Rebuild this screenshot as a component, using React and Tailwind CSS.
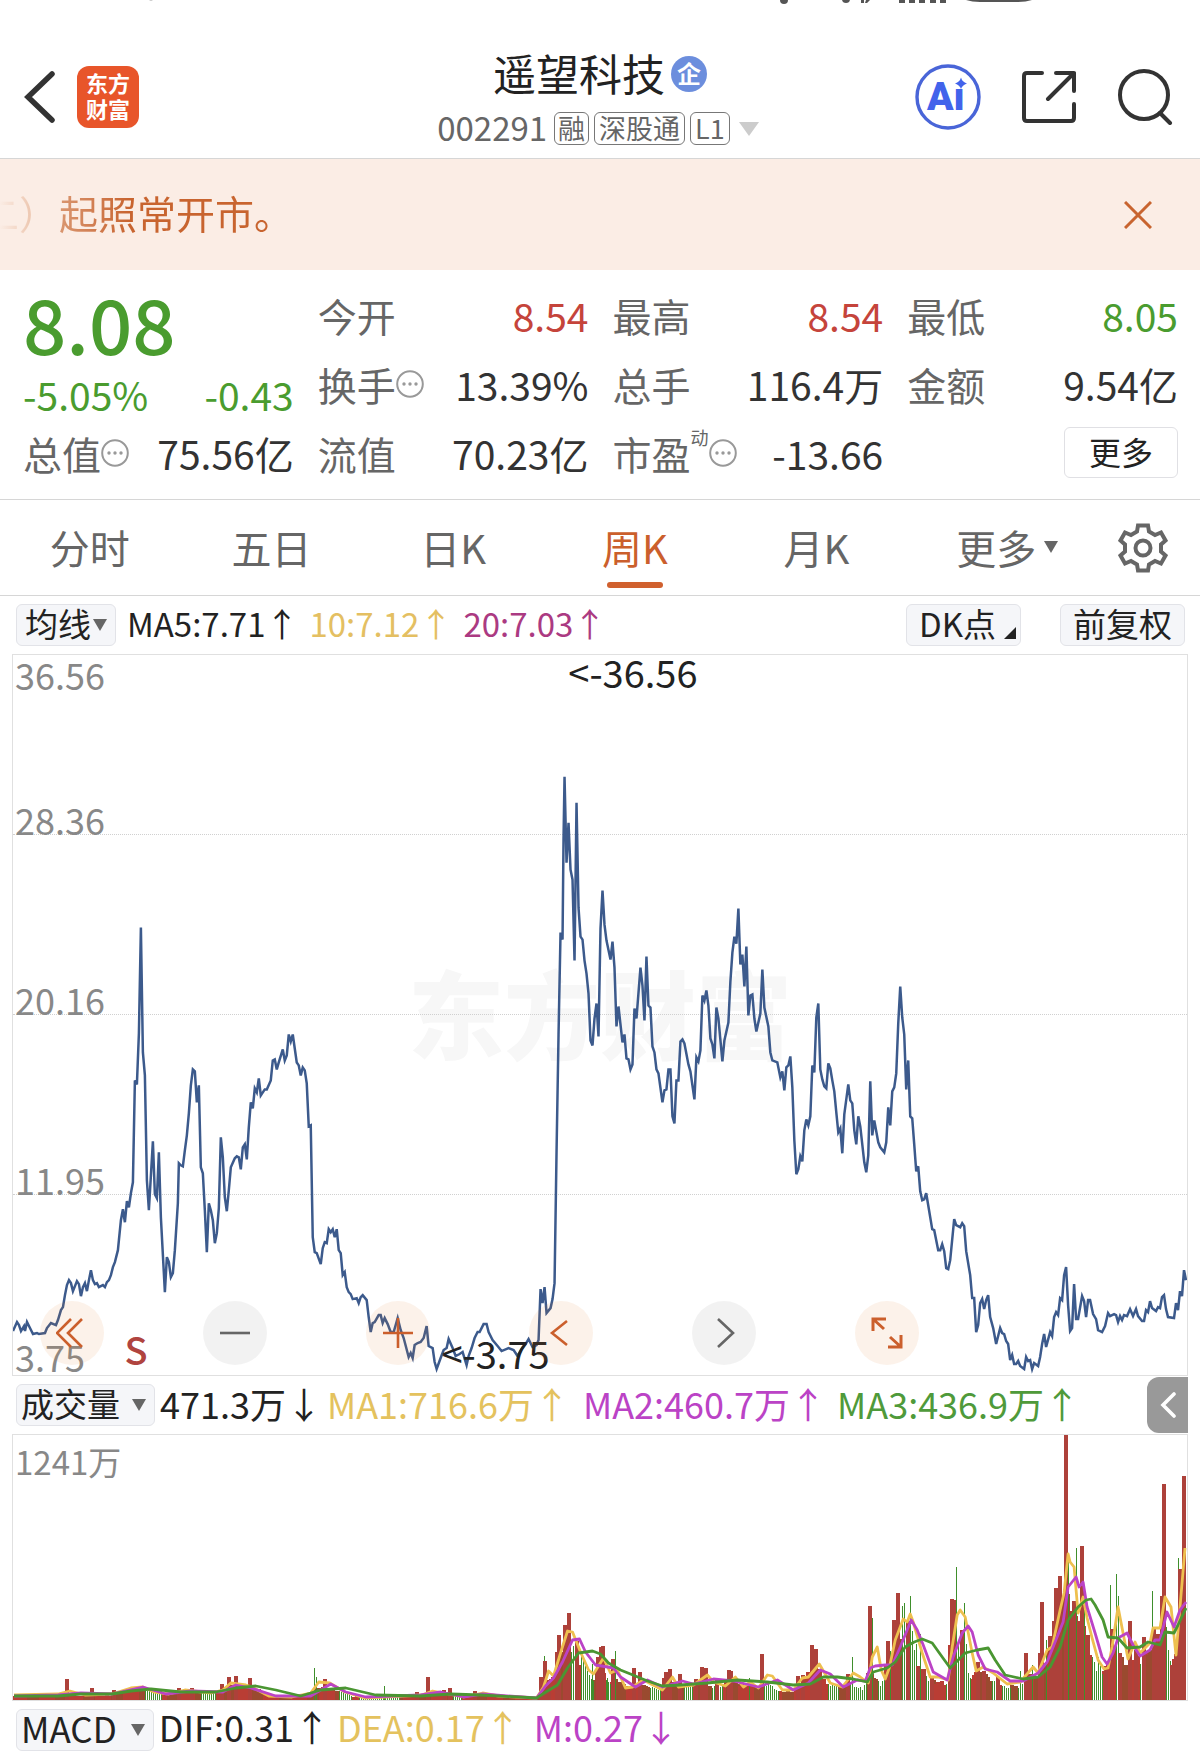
import React from "react";

const PRICE =
  "12,1331 16,1322 18,1325 20,1331 23,1326 24,1331 26,1322 29,1328 32,1334 36,1333 38,1334 44,1333 46,1328 50,1323 55,1325 57,1320 60,1310 62,1307 64,1295 66,1285 68,1280 70,1283 72,1291 76,1281 78,1284 80,1296 82,1287 84,1283 86,1291 88,1280 90,1270 92,1280 94,1284 96,1283 98,1287 102,1285 104,1287 106,1282 108,1280 110,1275 112,1267 114,1262 117,1250 118,1240 120,1220 122,1209 124,1222 126,1201 128,1207 130,1193 132,1182 134,1080 136,1084 138,1033 140,927 142,1052 144,1075 146,1180 148,1210 152,1141 154,1194 156,1198 158,1152 160,1217 164,1292 166,1257 168,1262 170,1277 172,1273 174,1250 177,1203 178,1163 180,1165 182,1166 184,1150 186,1135 188,1113 190,1085 192,1069 194,1071 196,1102 198,1085 200,1167 202,1173 204,1210 206,1252 208,1203 210,1210 212,1220 214,1243 216,1233 218,1208 220,1137 222,1157 224,1197 226,1211 228,1190 230,1167 234,1158 236,1156 238,1157 240,1169 242,1147 244,1144 246,1159 248,1127 250,1102 252,1108 254,1088 256,1092 258,1078 260,1095 264,1089 266,1089 270,1080 272,1060 274,1059 276,1069 278,1062 282,1049 284,1060 286,1055 288,1034 290,1041 292,1034 296,1062 298,1065 300,1075 302,1067 304,1070 306,1083 308,1126 310,1125 312,1237 314,1252 316,1253 320,1264 322,1248 324,1242 326,1243 328,1229 330,1232 332,1229 334,1237 336,1229 338,1250 340,1253 342,1275 344,1272 346,1287 348,1292 350,1294 352,1299 356,1298 358,1303 360,1297 362,1295 366,1300 368,1317 370,1332 372,1323 374,1322 378,1315 380,1315 382,1323 384,1318 387,1324 390,1332 393,1332 397,1318 400,1330 403,1338 408,1357 410,1353 412,1358 414,1345 417,1343 420,1342 423,1338 426,1326 428,1346 432,1348 434,1362 436,1369 440,1358 443,1350 446,1348 448,1339 452,1348 455,1356 459,1354 462,1352 466,1365 468,1356 471,1348 474,1338 477,1332 479,1332 483,1324 486,1324 488,1332 492,1340 497,1346 501,1351 508,1348 513,1350 517,1356 521,1349 525,1344 528,1339 532,1347 536,1345 538,1340 540,1289 542,1303 544,1287 546,1313 550,1308 552,1299 554,1283 556,1152 558,1034 560,932 562,939 563,838 564,776 566,862 568,822 570,869 572,879 574,960 576,802 578,907 580,936 582,939 584,960 586,973 588,993 590,1040 592,1045 594,1018 596,1003 598,1036 600,928 602,890 604,924 606,940 610,959 612,941 614,967 616,1026 618,1006 622,1042 624,1034 626,1058 628,1059 630,1069 632,1064 634,1008 636,1018 640,967 642,985 644,1020 646,956 648,1005 650,1007 652,1046 654,1052 656,1069 658,1073 662,1102 664,1090 666,1089 668,1069 670,1069 672,1116 674,1123 676,1080 678,1080 680,1041 682,1039 684,1043 688,1064 690,1071 694,1099 696,1057 698,1061 700,1050 702,995 704,1000 706,990 708,1005 710,1038 712,1044 714,1058 716,1007 718,1018 722,1061 724,1040 728,1022 730,981 732,952 734,936 736,943 738,908 740,964 742,954 744,986 746,946 748,1015 750,995 752,994 754,1018 756,1031 760,1013 762,969 764,1007 768,1026 770,1052 772,1060 777,1062 780,1077 782,1071 784,1090 786,1067 788,1065 790,1056 792,1087 794,1140 796,1174 798,1169 800,1156 802,1161 804,1130 806,1119 808,1125 810,1116 812,1065 814,1072 816,1017 818,1003 820,1069 822,1079 824,1086 826,1088 828,1063 830,1068 832,1080 834,1091 836,1112 838,1132 840,1128 842,1153 844,1114 848,1084 850,1100 852,1103 854,1130 856,1144 858,1116 860,1126 864,1162 866,1172 868,1155 870,1081 872,1135 874,1120 878,1142 880,1147 884,1152 886,1142 888,1107 890,1125 892,1091 894,1087 896,1073 898,1023 900,986 902,1017 904,1034 906,1089 908,1060 910,1116 912,1118 914,1144 916,1171 918,1166 920,1191 922,1200 924,1199 926,1193 928,1205 932,1229 934,1230 938,1250 940,1250 942,1244 944,1251 946,1268 948,1269 950,1260 954,1219 956,1225 960,1227 962,1223 964,1226 966,1251 970,1275 972,1298 974,1298 976,1332 978,1325 980,1303 982,1299 984,1309 986,1300 988,1295 990,1317 993,1328 996,1344 1000,1328 1002,1333 1004,1334 1006,1341 1008,1344 1010,1360 1012,1355 1014,1364 1016,1364 1018,1361 1020,1366 1024,1369 1026,1357 1028,1361 1030,1360 1032,1369 1034,1363 1038,1366 1040,1357 1042,1344 1044,1334 1046,1347 1050,1332 1052,1336 1054,1317 1056,1312 1058,1315 1060,1298 1062,1300 1064,1275 1066,1267 1068,1305 1070,1331 1072,1328 1074,1284 1076,1319 1078,1319 1082,1296 1084,1301 1086,1317 1088,1300 1090,1300 1093,1314 1096,1319 1098,1330 1102,1332 1105,1326 1108,1313 1110,1316 1114,1314 1116,1315 1118,1322 1120,1316 1122,1320 1124,1315 1127,1316 1130,1309 1133,1316 1136,1309 1138,1316 1142,1321 1144,1321 1146,1310 1148,1312 1150,1301 1152,1308 1156,1311 1158,1307 1160,1308 1162,1297 1164,1295 1166,1309 1168,1317 1174,1318 1176,1303 1178,1310 1180,1291 1182,1296 1184,1270 1186,1280";

const MA_SHORT =
  "13,1695 57,1694 69,1691 84,1695 111,1694 130,1688 142,1687 153,1692 168,1694 184,1690 210,1693 222,1690 230,1683 245,1685 251,1687 268,1696 291,1697 310,1693 318,1682 329,1683 344,1692 364,1698 421,1695 432,1691 463,1697 482,1693 498,1696 536,1698 543,1687 548,1671 553,1676 560,1653 567,1631 572,1632 580,1652 588,1670 593,1674 603,1658 610,1673 617,1670 625,1688 632,1687 643,1680 662,1690 672,1677 678,1687 693,1685 707,1675 713,1682 725,1686 735,1677 743,1687 750,1682 758,1688 767,1675 772,1676 782,1690 793,1690 802,1678 808,1677 819,1664 830,1683 842,1687 853,1673 860,1677 868,1683 872,1657 877,1647 881,1670 885,1679 889,1668 895,1640 903,1619 907,1622 910,1614 913,1622 922,1653 930,1677 938,1677 948,1680 952,1647 957,1615 960,1610 965,1617 972,1653 976,1671 983,1667 993,1673 1007,1684 1020,1682 1033,1667 1038,1673 1047,1650 1052,1647 1060,1610 1064,1593 1068,1554 1070,1562 1074,1567 1078,1613 1083,1597 1087,1618 1092,1638 1098,1660 1104,1669 1108,1668 1112,1647 1118,1607 1123,1633 1128,1659 1135,1642 1140,1653 1150,1643 1153,1628 1160,1628 1165,1597 1171,1607 1176,1655 1180,1607 1185,1548";

const MA_MID =
  "13,1696 57,1695 80,1693 111,1694 142,1687 165,1694 190,1691 222,1692 235,1685 250,1688 275,1696 310,1696 330,1684 345,1692 365,1697 420,1695 440,1692 463,1697 482,1694 536,1698 545,1686 553,1678 562,1662 572,1640 579,1639 585,1652 595,1665 607,1667 613,1668 620,1677 635,1687 647,1680 662,1687 682,1681 693,1684 713,1679 733,1681 758,1687 777,1680 793,1690 808,1683 820,1670 830,1674 843,1687 857,1680 865,1681 870,1668 875,1666 885,1665 892,1665 900,1647 911,1620 917,1630 923,1645 933,1672 947,1680 953,1657 962,1633 968,1626 972,1632 978,1655 985,1669 997,1672 1010,1681 1023,1681 1038,1673 1047,1662 1055,1642 1063,1622 1068,1587 1076,1577 1079,1587 1083,1582 1087,1607 1095,1633 1102,1657 1107,1664 1113,1653 1118,1638 1127,1633 1133,1645 1140,1656 1150,1650 1155,1640 1160,1640 1167,1612 1174,1627 1180,1610 1186,1602";

const MA_LONG =
  "13,1696 57,1696 80,1694 111,1694 130,1691 150,1689 180,1692 215,1692 235,1688 255,1686 275,1690 300,1696 320,1690 345,1688 375,1695 420,1696 450,1694 480,1695 536,1698 547,1691 557,1685 567,1668 578,1653 592,1651 600,1654 608,1663 620,1670 630,1674 647,1681 662,1686 680,1685 707,1683 737,1680 767,1682 793,1685 810,1684 823,1677 837,1677 853,1679 867,1682 873,1672 887,1668 895,1662 905,1647 914,1642 922,1639 932,1643 942,1657 950,1668 965,1653 977,1650 988,1648 995,1660 1005,1675 1023,1679 1038,1677 1050,1667 1060,1647 1068,1620 1078,1607 1086,1600 1091,1599 1095,1605 1103,1620 1108,1637 1118,1638 1127,1648 1140,1647 1148,1642 1160,1645 1165,1632 1174,1633 1178,1625 1186,1608";

/* Typical weekly volume as [x, height] knots, in chart units */
const VOLUME_BASE = [
  [12, 4], [60, 7], [75, 4], [110, 5], [126, 13], [142, 13], [160, 9], [175, 6], [190, 10], [215, 7], [222, 13],
  [235, 17], [250, 15], [265, 8], [285, 3], [308, 3], [315, 14], [325, 14], [340, 9], [352, 4], [420, 5], [445, 9],
  [455, 4], [475, 7], [490, 4], [505, 3], [538, 3], [545, 20], [555, 30], [562, 55], [568, 62], [576, 48], [592, 20],
  [600, 44], [608, 18], [615, 22], [630, 14], [645, 16], [660, 11], [670, 21], [680, 16], [700, 17], [715, 15],
  [730, 22], [745, 16], [760, 15], [768, 18], [780, 9], [795, 9], [803, 22], [815, 40], [825, 19], [840, 14],
  [850, 18], [862, 12], [870, 34], [880, 16], [890, 50], [898, 80], [908, 72], [918, 36], [930, 22], [946, 18],
  [952, 74], [958, 58], [970, 24], [980, 34], [992, 22], [1005, 14], [1020, 16], [1030, 24], [1040, 27], [1048, 52],
  [1058, 84], [1066, 120], [1074, 88], [1082, 86], [1090, 54], [1100, 20], [1112, 60], [1118, 60], [1124, 38],
  [1135, 46], [1142, 42], [1155, 62], [1164, 72], [1172, 36], [1176, 48], [1184, 140], [1188, 140],
];

/* Stretches in which falling weeks prevail */
const FALLING = [
  [143, 160], [200, 215], [338, 350], [358, 398], [452, 460], [570, 574], [579, 592], [606, 610], [650, 661],
  [684, 693], [711, 722], [764, 779], [828, 838], [850, 866], [878, 884], [901, 906], [909, 916], [926, 930],
  [946, 949], [956, 960], [963, 971], [992, 996], [1001, 1010], [1018, 1024], [1091, 1102], [1109, 1110],
  [1115, 1119], [1140, 1143], [1166, 1170],
];

const RISING_PEAKS = [
  [66, 21], [91, 12], [113, 10], [178, 12], [191, 12], [221, 16], [228, 23], [235, 24], [249, 22], [324, 21],
  [416, 8], [427, 23], [443, 10], [449, 12], [474, 9], [540, 23], [544, 39], [548, 20], [556, 48], [558, 65],
  [564, 75], [568, 87], [576, 59], [597, 43], [600, 53], [603, 54], [613, 41], [634, 32], [640, 28], [664, 22],
  [666, 28], [670, 31], [680, 26], [696, 21], [702, 33], [706, 32], [717, 22], [729, 30], [731, 29], [762, 46],
  [798, 24], [803, 25], [812, 55], [816, 51], [820, 31], [848, 26], [870, 94], [888, 59], [894, 80], [898, 107],
  [908, 79], [918, 34], [924, 31], [932, 23], [950, 41], [952, 101], [954, 100], [962, 70], [978, 38], [984, 29],
  [998, 23], [1026, 47], [1030, 26], [1040, 47], [1042, 98], [1050, 64], [1054, 79], [1056, 112], [1060, 124],
  [1066, 265], [1072, 89], [1074, 99], [1080, 79], [1082, 154], [1088, 65], [1106, 31], [1112, 71], [1120, 47],
  [1130, 79], [1136, 50], [1144, 63], [1154, 71], [1158, 66], [1162, 104], [1164, 216], [1172, 35], [1176, 46],
  [1180, 131], [1184, 224],
];

const FALLING_PEAKS = [
  [313, 32], [315, 23], [383, 14], [543, 44], [570, 48], [572, 54], [580, 46], [582, 41], [584, 34], [586, 29],
  [591, 36], [607, 22], [615, 49], [749, 22], [852, 43], [872, 82], [890, 49], [902, 94], [904, 97], [910, 104],
  [912, 69], [914, 43], [916, 56], [920, 66], [956, 133], [958, 58], [964, 97], [966, 56], [1020, 29], [1032, 35],
  [1046, 60], [1068, 139], [1076, 152], [1084, 90], [1092, 40], [1098, 43], [1100, 34], [1110, 115], [1116, 126],
  [1118, 104], [1152, 109], [1166, 73], [1168, 50], [1170, 38], [1178, 142], [1182, 170],
];

function baseAt(x) {
  for (let i = 1; i < VOLUME_BASE.length; i++) {
    const [x1, h1] = VOLUME_BASE[i];
    if (x <= x1) {
      const [x0, h0] = VOLUME_BASE[i - 1];
      return h0 + ((h1 - h0) * (x - x0)) / (x1 - x0);
    }
  }
  return 0;
}

const WEEKS = Array.from({ length: 586 }, (_, i) => {
  const x = 14 + i * 2;
  const wobble = 0.88 + 0.12 * Math.sin(i * 2.3) * Math.cos(i * 0.9);
  return { x, h: Math.round(baseAt(x) * wobble), falling: FALLING.some(([a, b]) => x >= a && x <= b) };
});

function VolumeBars() {
  return (
    <g shapeRendering="crispEdges">
      {WEEKS.filter((w) => !w.falling).map((w) => (
        <rect key={w.x} x={w.x - 2} y={1700 - w.h} width="4" height={w.h} fill={w.x % 28 < 12 ? "#9a4a2f" : "#b93d34"} />
      ))}
      {WEEKS.filter((w) => w.falling).map((w) => (
        <rect key={w.x} x={w.x} y={1700 - w.h} width="1" height={w.h} fill="#3f8f2c" />
      ))}
      {FALLING_PEAKS.map(([x, h]) => (
        <rect key={x} x={x} y={1700 - h} width="1" height={h} fill="#3f8f2c" />
      ))}
      {RISING_PEAKS.map(([x, h]) => (
        <rect key={x} x={x - 2} y={1700 - h} width="4" height={h} fill="#ad413a" />
      ))}
    </g>
  );
}

function Chip({ children, className }) {
  return (
    <button
      type="button"
      className={`flex h-[42px] shrink-0 items-center rounded-md border border-[#e2e3e8] bg-[#f5f6f9] pb-1 text-[33px] leading-[36px] text-[#222] ${className}`}
    >
      {children}
    </button>
  );
}

function Caret({ className }) {
  return (
    <svg viewBox="0 0 14 14" preserveAspectRatio="none" className={className} aria-hidden="true">
      <path d="M0 0H14L7 14Z" fill="currentColor" />
    </svg>
  );
}

function Info() {
  return (
    <svg viewBox="0 0 28 28" className="h-7 w-7 shrink-0 text-[#999]" aria-hidden="true">
      <circle cx="14" cy="14" r="12.800" fill="none" stroke="currentColor" strokeWidth="2" />
      <circle cx="8" cy="14" r="1.700" fill="currentColor" />
      <circle cx="14" cy="14" r="1.700" fill="currentColor" />
      <circle cx="20" cy="14" r="1.700" fill="currentColor" />
    </svg>
  );
}

function Stat({ label, value, tone = "text-[#333]", info, sup }) {
  return (
    <div className="flex items-center justify-between whitespace-nowrap">
      <span className="flex items-center text-[#666]">
        {label}
        {sup && <sup className="relative -top-4 text-[18px] leading-none">{sup}</sup>}
        {info && <Info />}
      </span>
      <span className={tone}>{value}</span>
    </div>
  );
}

function RoundButton({ label, warm, children }) {
  return (
    <button
      type="button"
      aria-label={label}
      className={`flex size-16 items-center justify-center rounded-full ${
        warm ? "bg-[#e08030]/10 text-[#cb5f2c]" : "bg-black/5 text-[#666]"
      }`}
    >
      <svg viewBox="0 0 32 32" className="size-8" fill="none" stroke="currentColor" strokeWidth="2.600" aria-hidden="true">
        {children}
      </svg>
    </button>
  );
}

const TABS = ["分时", "五日", "日K", "周K", "月K"];

export default function App() {
  return (
    <div className="w-full overflow-hidden bg-white font-['Noto_Sans_CJK_SC',sans-serif] text-[#222]">
      <svg viewBox="0 0 1200 5" className="block w-full" aria-hidden="true">
        <g fill="#555">
          <circle cx="784" cy="0" r="4" />
          <circle cx="846" cy="-1" r="4" />
          <path d="M861 0h3v3h-3zM866 0h4l-3 3h-2z" />
          <path d="M899 0h6v3h-6zM909 0h6v3h-6zM919 0h6v3h-6zM930 0h6v3h-6zM940 0h6v3h-6z" />
          <path d="M966 0Q972 2 980 2H1018Q1026 2 1032 0" />
        </g>
        <circle cx="151" cy="-1" r="2" fill="#ccc" />
      </svg>

      <header className="flex h-[154px] items-center justify-between border-b border-[#d6d6d6] px-6 pt-[30px]">
        <div className="flex w-[280px] items-center gap-[21px]">
          <button type="button" aria-label="返回">
            <svg viewBox="0 0 32 52" className="h-[52px] w-8" fill="none" stroke="#333" strokeWidth="5.500" aria-hidden="true">
              <path d="M28 3L4 26L28 49" strokeLinecap="round" strokeLinejoin="miter" />
            </svg>
          </button>
          <div className="flex size-[62px] flex-col items-center justify-center rounded-xl bg-[#e8552a] pb-1 text-[22px] leading-[26px] font-bold text-white">
            <span>东方</span>
            <span>财富</span>
          </div>
        </div>
        <div className="flex flex-col items-center gap-1">
          <h1 className="flex items-center gap-1.5 text-[43px] leading-[60px]">
            遥望科技
            <span className="mt-1 flex size-9 items-center justify-center rounded-full bg-[#6c8edd] pb-0.5 text-[24px] leading-none font-bold text-white">
              企
            </span>
          </h1>
          <div className="flex items-center gap-[5px] pr-1 text-[27px] leading-[28px] text-[#666]">
            <span className="mr-0.5 pb-1 text-[33px] leading-[42px]">002291</span>
            <span className="flex h-[33px] items-center rounded-md border border-[#777] px-[3px] pb-0.5">融</span>
            <span className="flex h-[33px] items-center rounded-md border border-[#777] px-1 pb-0.5">深股通</span>
            <span className="flex h-[33px] items-center rounded-md border border-[#777] px-1 pb-0.5">L1</span>
            <button type="button" aria-label="切换" className="ml-1">
              <Caret className="h-3.5 w-5 text-[#ccc]" />
            </button>
          </div>
        </div>
        <div className="flex w-[280px] items-center justify-end gap-[41px] pr-[3px]">
          <button type="button" aria-label="AI 助手">
            <svg viewBox="0 0 66 66" className="size-[66px]" aria-hidden="true">
              <circle cx="33" cy="33" r="31" fill="none" stroke="#4965d8" strokeWidth="3.400" />
              <text x="12" y="46" fontFamily="Roboto" fontWeight="900" fontSize="39" fill="#4263eb">
                Aı
              </text>
              <path d="M46 13.500Q47.200 18 52 19.500Q47.200 21 46 25Q44.800 21 40 19.500Q44.800 18 46 13.500Z" fill="#4263eb" />
            </svg>
          </button>
          <button type="button" aria-label="分享">
            <svg viewBox="0 0 54 54" className="size-[54px]" fill="none" stroke="#333" strokeWidth="4" strokeLinecap="round" strokeLinejoin="round" aria-hidden="true">
              <path d="M20 3H5Q2 3 2 6V48Q2 51 5 51H49Q52 51 52 48V34" />
              <path d="M34 3H52V21M52 3L26 29" />
            </svg>
          </button>
          <button type="button" aria-label="搜索">
            <svg viewBox="0 0 56 56" className="size-14" fill="none" stroke="#333" strokeWidth="4" strokeLinecap="round" aria-hidden="true">
              <circle cx="27" cy="26" r="24" />
              <path d="M43 44L53 54" />
            </svg>
          </button>
        </div>
      </header>

      <div className="flex h-[111px] items-center justify-between bg-[#fbede5] pr-12 text-[39px] text-[#c8642f]">
        <p className="flex pb-1 whitespace-nowrap">
          <span className="-ml-5 bg-linear-to-r from-[#fbede5] from-25% to-[#e0a885] bg-clip-text text-transparent">二）</span>
          <span className="ml-px bg-linear-to-r from-[#d9966f] to-[#c8642f] to-30% bg-clip-text text-transparent">起照常开市。</span>
        </p>
        <button type="button" aria-label="关闭">
          <svg viewBox="0 0 28 28" className="size-7" fill="none" stroke="currentColor" strokeWidth="3" aria-hidden="true">
            <path d="M1 1L27 27M27 1L1 27" />
          </svg>
        </button>
      </div>

      <section className="grid h-[230px] grid-cols-4 grid-rows-[69px_69px_69px] gap-x-6 border-b border-[#d6d6d6] pt-2.5 pr-[22px] pl-[23px] text-[39px] leading-[60px]">
        <div className="row-span-2 flex flex-col text-[#4a9c2f]">
          <strong className="text-[76px] leading-[84px] font-medium">8.08</strong>
          <div className="flex justify-between whitespace-nowrap">
            <span>-5.05%</span>
            <span>-0.43</span>
          </div>
        </div>
        <Stat label="今开" value="8.54" tone="text-[#c5443b]" />
        <Stat label="最高" value="8.54" tone="text-[#c5443b]" />
        <Stat label="最低" value="8.05" tone="text-[#4a9c2f]" />
        <Stat label="换手" value="13.39%" info />
        <Stat label="总手" value="116.4万" />
        <Stat label="金额" value="9.54亿" />
        <Stat label="总值" value="75.56亿" info />
        <Stat label="流值" value="70.23亿" />
        <Stat label="市盈" sup="动" value="-13.66" info />
        <div className="flex items-center justify-end">
          <button type="button" className="flex h-[51px] items-center rounded-md border border-[#e0e0e4] px-6 pb-1 text-[32px] leading-[44px]">
            更多
          </button>
        </div>
      </section>

      <nav className="flex h-24 items-center border-b border-[#d6d6d6] pr-8 text-[40px] text-[#666]">
        <div className="grid h-full flex-1 grid-cols-6">
          {TABS.map((tab) => (
            <button
              key={tab}
              type="button"
              className={`relative flex items-center justify-center pr-0.5 pb-0.5 ${tab === "周K" ? "text-[#cb5f2c]" : ""}`}
            >
              {tab}
              {tab === "周K" && <span className="absolute bottom-[7px] h-1.5 w-14 rounded-full bg-[#d0602e]" />}
            </button>
          ))}
          <button type="button" className="flex items-center justify-center gap-2 pb-0.5 pl-4">
            更多
            <Caret className="h-3 w-3.5" />
          </button>
        </div>
        <button type="button" aria-label="设置" className="flex w-[78px] justify-end">
          <svg viewBox="0 0 50 50" className="size-[50px]" fill="none" stroke="#666" strokeWidth="4" strokeLinejoin="miter" aria-hidden="true">
            <path d="M20 2.500H30L31 8.500L37 12L43 9.500L47.500 17.500L43 21.500V28.500L47.500 32.500L43 40.500L37 38L31 41.500L30 47.500H20L19 41.500L13 38L7 40.500L2.500 32.500L7 28.500V21.500L2.500 17.500L7 9.500L13 12L19 8.500Z" />
            <circle cx="25" cy="25" r="7.500" />
          </svg>
        </button>
      </nav>

      <div className="px-3">
        <div className="flex h-[58px] items-center gap-[11px] pr-[3px] pl-1 text-[33px] leading-[40px] whitespace-nowrap">
          <Chip className="px-2">
            均线
            <Caret className="mt-1 ml-0.5 h-3 w-3.5 text-[#666]" />
          </Chip>
          <span className="pb-1">MA5:7.71↑</span>
          <span className="pb-1 text-[#e4bf62]">10:7.12↑</span>
          <span className="pb-1 text-[#ab3a82]">20:7.03↑</span>
          <span className="flex-1" />
          <Chip className="mr-7 pr-1 pl-3">
            DK点
            <svg viewBox="0 0 12 12" className="mt-5 ml-2 size-3" aria-hidden="true">
              <path d="M12 0V12H0Z" fill="#222" />
            </svg>
          </Chip>
          <Chip className="px-3">前复权</Chip>
        </div>

        <section className="relative h-[722px] border border-[#e0e0e0]">
          <div className="absolute inset-0 flex items-center justify-center pb-2 text-[96px] leading-none font-black text-[#f7f7f7]">
            东方财富
          </div>
          <div className="absolute inset-0 grid grid-rows-4 text-[36px] leading-[30px] text-[#888]">
            <div className="flex flex-col justify-between border-b border-dotted border-[#d0d0d0] pt-1 pl-0.5">
              <span>36.56</span>
              <span>28.36</span>
            </div>
            <div className="flex items-end border-b border-dotted border-[#d0d0d0] pl-0.5">20.16</div>
            <div className="flex items-end border-b border-dotted border-[#d0d0d0] pl-0.5">11.95</div>
            <div className="flex items-end pb-1 pl-0.5">3.75</div>
          </div>
          <svg viewBox="12 654 1175 721" preserveAspectRatio="none" className="absolute inset-0 h-full w-full" aria-label="周K走势">
            <polyline points={PRICE} fill="none" stroke="#3c5a8c" strokeWidth="2.500" />
          </svg>
          <span className="absolute top-0 left-[47.3%] text-[38px] leading-[34px]">&lt;-36.56</span>
          <span className="absolute bottom-0 left-[36.5%] text-[38px] leading-[44px]">&lt;-3.75</span>
          <span className="absolute bottom-0 left-[9.5%] text-[38px] leading-[52px] font-medium text-[#b0443f]">S</span>
          <div className="absolute bottom-2.5 left-[27px] flex gap-[99px]">
            <RoundButton label="最早" warm>
              <path d="M15 2L1 16L15 30M26 2L12 16L26 30" />
            </RoundButton>
            <RoundButton label="缩小">
              <path d="M1 16H31" />
            </RoundButton>
            <RoundButton label="放大" warm>
              <path d="M1 16H31M16 1V31" />
            </RoundButton>
            <RoundButton label="向左" warm>
              <path d="M22 4L7 16L22 28" />
            </RoundButton>
            <RoundButton label="向右">
              <path d="M10 2L25 16L10 30" />
            </RoundButton>
            <RoundButton label="全屏" warm>
              <path d="M2 14V2H15M2 2L13 12M30 18V30H17M30 30L19 20" strokeWidth="3" />
            </RoundButton>
          </div>
        </section>

        <div className="flex h-[58px] items-center gap-[9px] pl-1 text-[36px] leading-[42px] whitespace-nowrap">
          <Chip className="-mr-1 pr-2 pl-1">
            成交量
            <Caret className="mt-1 ml-3 h-3 w-3.5 text-[#666]" />
          </Chip>
          <span className="pb-1">471.3万↓</span>
          <span className="-ml-1 pb-1 text-[#e4c25e]">MA1:716.6万↑</span>
          <span className="ml-1 pb-1 text-[#bb43c6]">MA2:460.7万↑</span>
          <span className="ml-0.5 pb-1 text-[#4f9a3a]">MA3:436.9万↑</span>
          <button type="button" aria-label="展开" className="ml-auto flex h-14 w-[41px] shrink-0 items-center justify-center rounded-l-xl bg-[#999]">
            <svg viewBox="0 0 16 26" className="h-[26px] w-4" fill="none" stroke="#fff" strokeWidth="3.600" strokeLinecap="round" aria-hidden="true">
              <path d="M14 2L3 13L14 24" />
            </svg>
          </button>
        </div>

        <section className="relative h-[267px] border border-[#e0e0e0]">
          <span className="absolute top-1.5 left-0.5 text-[33px] leading-[40px] text-[#888]">1241万</span>
          <svg viewBox="12 1435 1175 265" preserveAspectRatio="none" className="absolute inset-0 h-full w-full" aria-label="成交量">
            <VolumeBars />
            <g fill="none" strokeWidth="2.800" strokeLinejoin="round">
              <polyline points={MA_SHORT} stroke="#eec04f" />
              <polyline points={MA_MID} stroke="#bb43c6" />
              <polyline points={MA_LONG} stroke="#4a9632" />
            </g>
          </svg>
        </section>

        <div className="flex h-[52px] items-end gap-[9px] pb-0.5 pl-1 text-[36px] leading-[42px] whitespace-nowrap">
          <Chip className="-mr-1 pr-2 pl-1">
            <span className="text-[35px]">MACD</span>
            <Caret className="mt-1 ml-3.5 h-3 w-3.5 text-[#666]" />
          </Chip>
          <span className="pb-1">DIF:0.31↑</span>
          <span className="-ml-0.5 pb-1 text-[#e4c25e]">DEA:0.17↑</span>
          <span className="ml-1 pb-1 text-[#bb43c6]">M:0.27↓</span>
        </div>
      </div>
    </div>
  );
}
